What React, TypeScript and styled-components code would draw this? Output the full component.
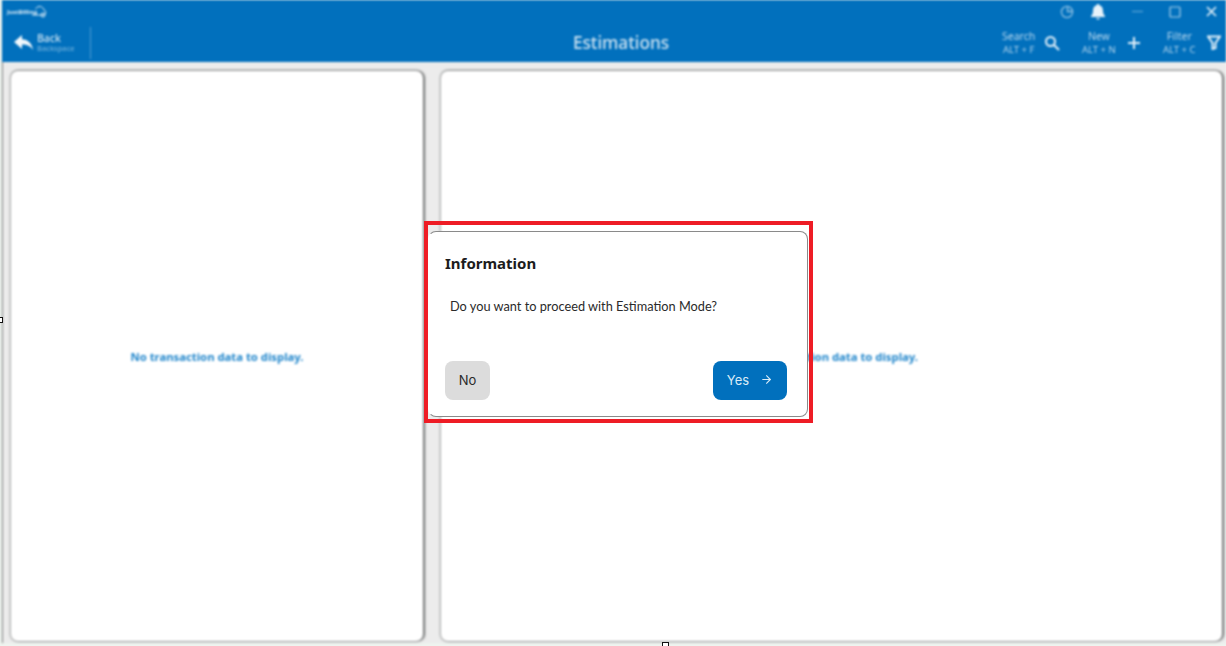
import React from "react";
import styled, { createGlobalStyle } from "styled-components";
import { ArrowRight } from "lucide-react";

const GlobalStyle = createGlobalStyle`
  html, body {
    margin: 0;
    padding: 0;
    width: 1226px;
    height: 646px;
    overflow: hidden;
    background: #eef4ef;
  }
  * { box-sizing: border-box; }
`;

const Page = styled.div`
  position: relative;
  width: 1226px;
  height: 646px;
  overflow: hidden;
  font-family: "Noto Sans", "Open Sans", sans-serif;
  background: #eef4ef;
`;

const Shell = styled.div`
  display: flex;
  flex-direction: column;
  height: 646px;
  padding-left: 2px;
  filter: blur(1.2px);
`;

const Header = styled.header`
  background: #0170bd;
  color: #fff;
  height: 62px;
  flex: none;
`;

const TitleBar = styled.div`
  height: 23px;
  display: flex;
  align-items: center;
  justify-content: space-between;
  padding: 0 9px 0 5px;
`;

const Logo = styled.div`
  position: relative;
  display: flex;
  align-items: center;
  width: 40px;
  height: 14px;
  font-size: 6px;
  font-weight: 700;
  color: #dcecf7;
`;

const LogoCloud = styled.svg`
  position: absolute;
  right: 0;
  top: 0;
`;

const WindowIcons = styled.div`
  display: flex;
  align-items: center;
`;

const TitleIcon = styled.svg<{ $left?: number }>`
  margin-left: ${(p) => p.$left ?? 0}px;
`;

const Toolbar = styled.div`
  height: 39px;
  display: grid;
  grid-template-columns: 1fr auto 1fr;
  align-items: center;
`;

const BackGroup = styled.div`
  display: flex;
  align-items: center;
  padding-left: 12px;
  gap: 3px;
`;

const Divider = styled.div`
  width: 1px;
  height: 32px;
  background: #4f9bd2;
  margin-left: 12px;
`;

const PageTitle = styled.div`
  font-size: 17.2px;
  color: #cfe4f3;
  font-weight: 500;
  margin-left: 14px;
`;

const Actions = styled.div`
  display: flex;
  justify-content: flex-end;
  align-items: center;
  padding-right: 5px;
`;

const Action = styled.div<{ $left?: number }>`
  display: flex;
  align-items: center;
  justify-content: space-between;
  width: 58px;
  margin-left: ${(p) => p.$left ?? 0}px;
`;

const Hint = styled.div`
  display: flex;
  flex-direction: column;
  align-items: center;
  font-size: 9.5px;
  line-height: 14px;
  color: #b5d6ee;
`;

const HintTop = styled.span`
  font-size: 10.5px;
`;

const BackText = styled.div`
  display: flex;
  flex-direction: column;
  font-size: 10.5px;
  line-height: 12px;
  color: #cfe4f3;
  font-weight: 500;
  padding-bottom: 1px;
`;

const BackSub = styled.span`
  font-size: 7.5px;
  line-height: 9px;
  color: #6fb0dc;
`;

const Content = styled.main`
  flex: 1;
  display: flex;
  gap: 18px;
  padding: 9px 0 2px 8px;
  border-left: 1px solid #7d7f7f;
  background: #ececec;
  margin-bottom: 3px;
`;

const Panel = styled.section<{ $width: number }>`
  width: ${(p) => p.$width}px;
  background: #fff;
  border-radius: 7px;
  box-shadow: 2px 0 2px #6f7171, -1px 0 2px #a9abab, 0 -1px 2px #8d8f8f, 0 1px 1px #a9abab;
  display: flex;
  align-items: center;
  justify-content: center;
`;

const Empty = styled.div`
  font-size: 11.3px;
  font-weight: 700;
  color: #1f85cb;
`;

const Highlight = styled.div`
  position: absolute;
  left: 424px;
  top: 221px;
  width: 389px;
  height: 202px;
  border: 4px solid #ee1c25;
  padding: 6px 0 2px 0;
`;

const Dialog = styled.div`
  height: 100%;
  margin-right: 1px;
  background: #fff;
  border: 1px solid #8a8a8a;
  border-left-color: transparent;
  border-radius: 8px;
  padding: 21px 20px 16px 16px;
  display: flex;
  flex-direction: column;
`;

const DialogTitle = styled.div`
  font-size: 15px;
  font-weight: 700;
  line-height: 20px;
  color: #1c1c1c;
`;

const DialogText = styled.div`
  font-family: Lato, "Noto Sans", sans-serif;
  font-size: 12.75px;
  line-height: 18px;
  color: #2a2a2a;
  margin: 24px 0 0 5px;
  flex: 1;
`;

const DialogActions = styled.div`
  display: flex;
  justify-content: space-between;
`;

const Button = styled.button<{ $primary?: boolean }>`
  height: 39px;
  border: none;
  border-radius: 8px;
  font-family: Inter, "Noto Sans", sans-serif;
  font-size: 13px;
  display: flex;
  align-items: center;
  justify-content: center;
  gap: 11px;
  padding: 0 0 2px;
  width: ${(p) => (p.$primary ? "74px" : "45px")};
  background: ${(p) => (p.$primary ? "#0170bd" : "#dcdcdc")};
  color: ${(p) => (p.$primary ? "#d9ebf7" : "#2a2a2a")};
`;

// selection handles left over from the screenshot markup
const Handle = styled.span<{ $x: number; $y: number; $w: number; $h: number }>`
  position: absolute;
  left: ${(p) => p.$x}px;
  top: ${(p) => p.$y}px;
  width: ${(p) => p.$w}px;
  height: ${(p) => p.$h}px;
  background: #fff;
  border: 1px solid #111;
`;

const App: React.FC = () => {
  return (
    <Page>
      <GlobalStyle />
      <Shell>
        <Header>
          <TitleBar>
            <Logo>
              JustBilling
              <LogoCloud width="15" height="13" viewBox="0 0 15 13" fill="none" stroke="#dcecf7" strokeWidth="1">
                <path d="M0 10h11c3.500 0 3.500-4 1-5C11 1 6 0 3.500 4" />
                <circle cx="11" cy="10" r="2" />
              </LogoCloud>
            </Logo>
            <WindowIcons>
              <svg width="14" height="14" viewBox="0 0 14 14" fill="none" stroke="#8fc1e4" strokeWidth="1.300">
                <circle cx="7" cy="7" r="5.600" />
                <path d="M7.500 1.500V6.500H12.500" />
              </svg>
              <TitleIcon $left={15} width="18" height="18" viewBox="0 0 18 18" fill="#e6f2fa">
                <path d="M9 1c.8 0 1.300.5 1.400 1.200C13 2.900 14 5 14 8c0 2.500 1 4 2 5v1H2v-1c1-1 2-2.500 2-5 0-3 1-5.100 3.600-5.800C7.700 1.500 8.200 1 9 1z" />
                <path d="M7.200 15h3.600c-.2 1-1 1.600-1.800 1.600S7.400 16 7.200 15z" />
              </TitleIcon>
              <TitleIcon $left={25} width="11" height="11" viewBox="0 0 11 11" stroke="#5ea6d8" strokeWidth="1.200">
                <path d="M0 5.500h11" />
              </TitleIcon>
              <TitleIcon $left={26} width="12" height="12" viewBox="0 0 12 12" fill="none" stroke="#a9d0ea" strokeWidth="1.200">
                <rect x="1" y="1" width="10" height="10" rx="1" />
              </TitleIcon>
              <TitleIcon $left={25} width="11" height="11" viewBox="0 0 11 11" stroke="#e6f2fa" strokeWidth="1.600">
                <path d="M1 1l9 9M10 1l-9 9" />
              </TitleIcon>
            </WindowIcons>
          </TitleBar>
          <Toolbar>
            <BackGroup>
              <svg width="20" height="16" viewBox="0 0 20 16" fill="#f2f8fc">
                <path d="M8 0v4.200c6 .3 10 3.800 11 10.800-2-3.500-5.500-5.400-11-5.400V14L0 7z" />
              </svg>
              <BackText>
                Back
                <BackSub>Backspace</BackSub>
              </BackText>
              <Divider />
            </BackGroup>
            <PageTitle>Estimations</PageTitle>
            <Actions>
              <Action>
                <Hint>
                  <HintTop>Search</HintTop>
                  <span>ALT + F</span>
                </Hint>
                <svg width="16" height="16" viewBox="0 0 16 16" fill="none" stroke="#e6f2fa" strokeWidth="2">
                  <circle cx="6.500" cy="6.500" r="4.500" />
                  <path d="M10 10l5 5" />
                </svg>
              </Action>
              <Action $left={22}>
                <Hint>
                  <HintTop>New</HintTop>
                  <span>ALT + N</span>
                </Hint>
                <svg width="12" height="12" viewBox="0 0 12 12" stroke="#e6f2fa" strokeWidth="2">
                  <path d="M6 0v12M0 6h12" />
                </svg>
              </Action>
              <Action $left={23}>
                <Hint>
                  <HintTop>Filter</HintTop>
                  <span>ALT + C</span>
                </Hint>
                <svg width="14" height="15" viewBox="0 0 14 15" fill="none" stroke="#e6f2fa" strokeWidth="2">
                  <path d="M1 1.500h12L8.500 8v5l-3 1V8z" />
                </svg>
              </Action>
            </Actions>
          </Toolbar>
        </Header>
        <Content>
          <Panel $width={412}>
            <Empty>No transaction data to display.</Empty>
          </Panel>
          <Panel $width={781}>
            <Empty>No transaction data to display.</Empty>
          </Panel>
        </Content>
      </Shell>
      <Highlight>
        <Dialog>
          <DialogTitle>Information</DialogTitle>
          <DialogText>Do you want to proceed with Estimation Mode?</DialogText>
          <DialogActions>
            <Button>No</Button>
            <Button $primary>
              Yes
              <ArrowRight size={13} strokeWidth={2} />
            </Button>
          </DialogActions>
        </Dialog>
      </Highlight>
      <Handle $x={-2} $y={317} $w={5} $h={6} />
      <Handle $x={662} $y={642} $w={7} $h={6} />
    </Page>
  );
};

export default App;
